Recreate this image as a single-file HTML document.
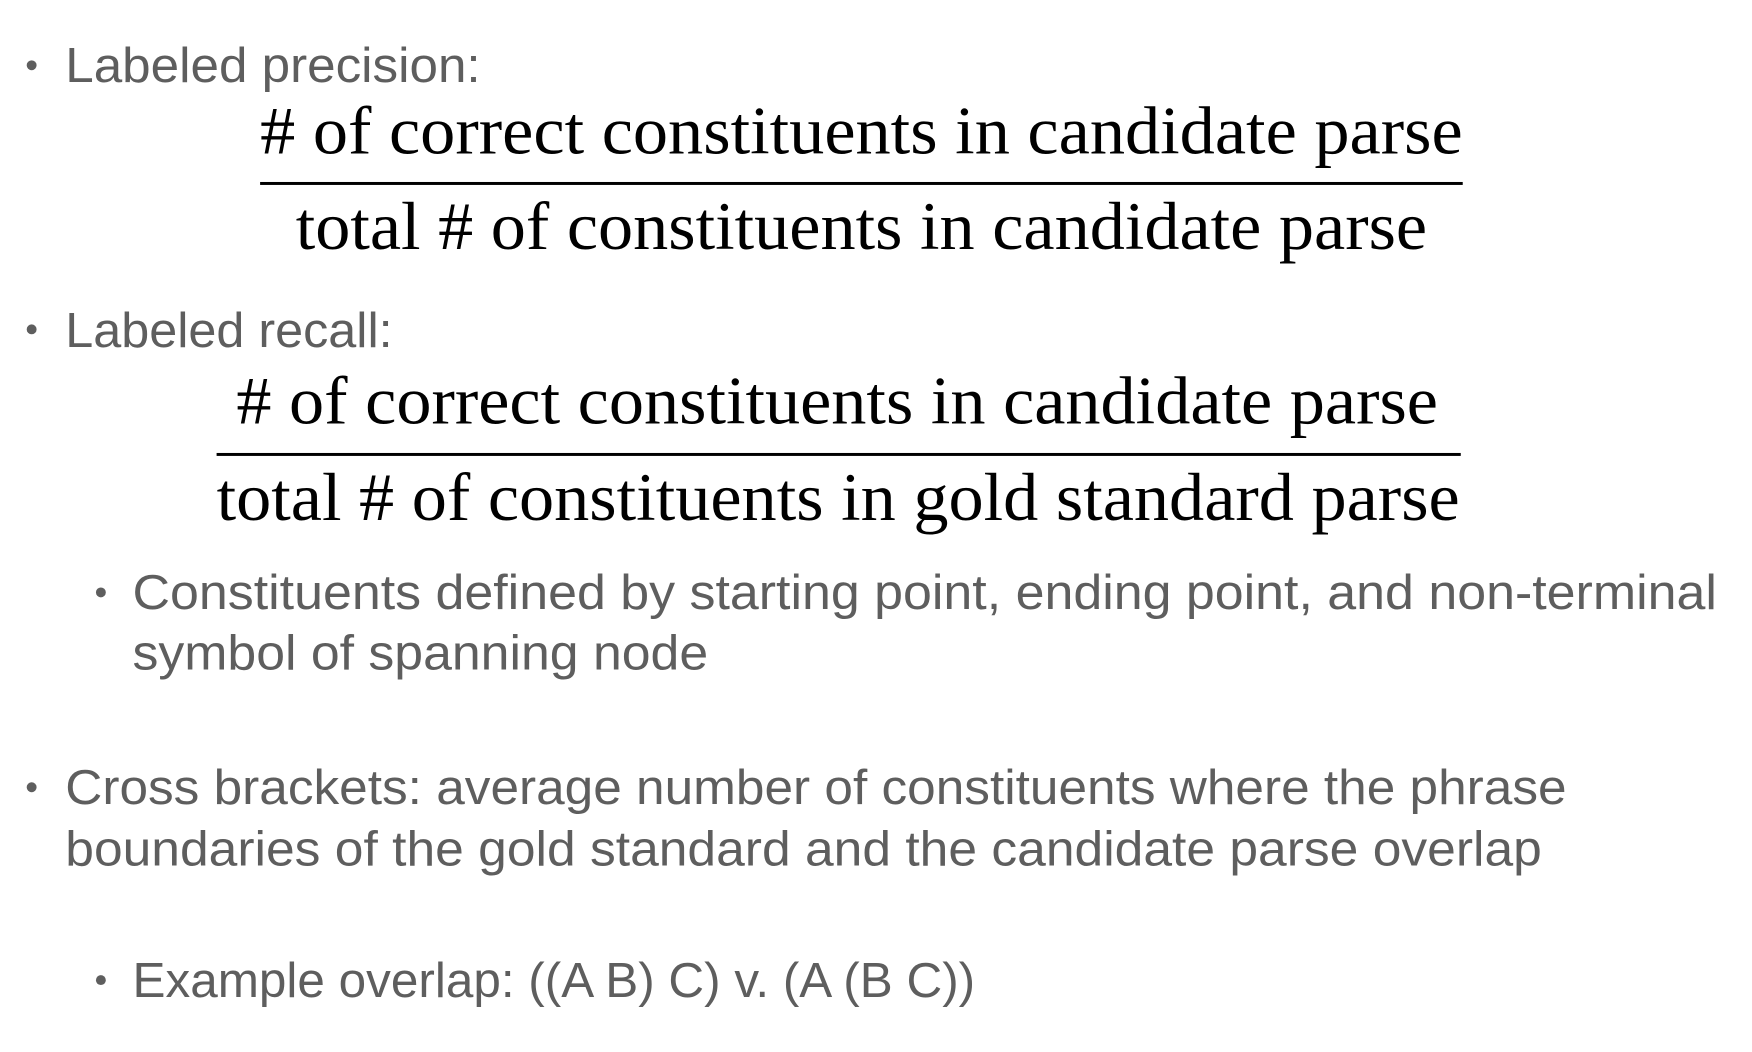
<!DOCTYPE html>
<html><head><meta charset="utf-8"><style>
html,body{margin:0;padding:0;background:#fff;width:1752px;height:1052px;overflow:hidden}
svg{display:block}
.s{font-family:"Liberation Sans",sans-serif;font-size:50px;fill:#5e5e5e}
.t{font-family:"Liberation Serif",serif;font-size:68px;fill:#000}
</style></head><body>
<svg width="1752" height="1052" viewBox="0 0 1752 1052">
<g transform="scale(0.989)">
<g fill="#5e5e5e">
<circle cx="32" cy="66" r="5"/>
<circle cx="32" cy="333" r="5"/>
<circle cx="102" cy="599" r="5"/>
<circle cx="32" cy="796" r="5"/>
<circle cx="102" cy="991" r="5"/>
</g>
<text class="s" x="66" y="83" textLength="420" lengthAdjust="spacingAndGlyphs">Labeled precision:</text>
<text class="t" x="263" y="155" textLength="1216" lengthAdjust="spacingAndGlyphs"># of correct constituents in candidate parse</text>
<rect x="263" y="184" width="1216" height="3" fill="#000"/>
<text class="t" x="299" y="252" textLength="1144" lengthAdjust="spacingAndGlyphs">total # of constituents in candidate parse</text>
<text class="s" x="66" y="351" textLength="331" lengthAdjust="spacingAndGlyphs">Labeled recall:</text>
<text class="t" x="239" y="428" textLength="1215" lengthAdjust="spacingAndGlyphs"># of correct constituents in candidate parse</text>
<rect x="219" y="458" width="1258" height="3" fill="#000"/>
<text class="t" x="219" y="526" textLength="1257" lengthAdjust="spacingAndGlyphs">total # of constituents in gold standard parse</text>
<text class="s" x="134" y="616" textLength="1602" lengthAdjust="spacingAndGlyphs">Constituents defined by starting point, ending point, and non-terminal</text>
<text class="s" x="134" y="677" textLength="582" lengthAdjust="spacingAndGlyphs">symbol of spanning node</text>
<text class="s" x="66" y="813" textLength="1518" lengthAdjust="spacingAndGlyphs">Cross brackets: average number of constituents where the phrase</text>
<text class="s" x="66" y="875" textLength="1493" lengthAdjust="spacingAndGlyphs">boundaries of the gold standard and the candidate parse overlap</text>
<text class="s" x="134" y="1008" textLength="852" lengthAdjust="spacingAndGlyphs">Example overlap: ((A B) C) v. (A (B C))</text>
</g>
</svg>
</body></html>
